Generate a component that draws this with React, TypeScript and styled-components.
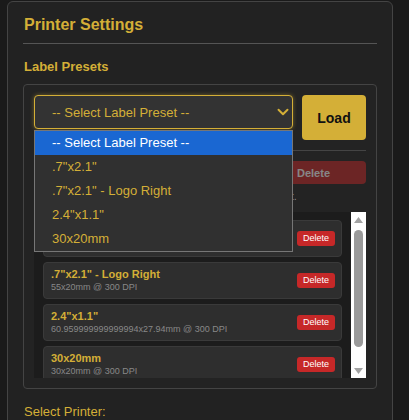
import styled, { createGlobalStyle } from 'styled-components';
import { ChevronDown } from 'lucide-react';

const gold = '#d4af37';

const GlobalStyle = createGlobalStyle`
  body {
    margin: 0;
    background: #1a1a1a;
    font-family: 'Liberation Sans', Arial, sans-serif;
  }
`;

const presets = [
  { name: '.7"x2.1"', meta: '55x20mm @ 300 DPI' },
  { name: '.7"x2.1" - Logo Right', meta: '55x20mm @ 300 DPI' },
  { name: '2.4"x1.1"', meta: '60.959999999999994x27.94mm @ 300 DPI' },
  { name: '30x20mm', meta: '30x20mm @ 300 DPI' },
];

const options = ['-- Select Label Preset --', ...presets.map((p) => p.name)];

// headless has no visible scrollbars, so the list's bar is drawn by hand
const ScrollBar = () => (
  <Track>
    <Arrow>
      <svg width='9' height='6' viewBox='0 0 9 6'>
        <polygon points='0,6 9,6 4.5,0' fill='#a3a3a3' />
      </svg>
    </Arrow>
    <Rail>
      <Thumb />
    </Rail>
    <Arrow>
      <svg width='9' height='6' viewBox='0 0 9 6'>
        <polygon points='0,0 9,0 4.5,6' fill='#a3a3a3' />
      </svg>
    </Arrow>
  </Track>
);

const App = () => {
  return (
    <>
      <GlobalStyle />
      <Page>
        <Panel>
          <Title>Printer Settings</Title>
          <SectionTitle>Label Presets</SectionTitle>
          <PresetBox>
            <LoadRow>
              <SelectWrap>
                <SelectBox>
                  <span>-- Select Label Preset --</span>
                  <ChevronDown size={18} strokeWidth={2.6} />
                </SelectBox>
                <Dropdown>
                  {options.map((o, i) => (
                    <Option key={o} active={i === 0}>
                      {o}
                    </Option>
                  ))}
                </Dropdown>
              </SelectWrap>
              <LoadButton>Load</LoadButton>
            </LoadRow>
            <Divider />
            <ManageRow>
              <NameInput placeholder='Preset name' />
              <DisabledDelete disabled>Delete</DisabledDelete>
            </ManageRow>
            <Hint>Select a saved preset above to load it, or to remove it.</Hint>
            <PresetList>
              <Viewport>
                {presets.map((p) => (
                  <PresetItem key={p.name}>
                    <div>
                      <PresetName>{p.name}</PresetName>
                      <PresetMeta>{p.meta}</PresetMeta>
                    </div>
                    <ItemDelete>Delete</ItemDelete>
                  </PresetItem>
                ))}
              </Viewport>
              <ScrollBar />
            </PresetList>
          </PresetBox>
          <PrinterLabel>Select Printer:</PrinterLabel>
        </Panel>
      </Page>
    </>
  );
};

const Page = styled.div`
  padding: 1px 0 0 7px;
`;

const Panel = styled.div`
  width: 386px;
  box-sizing: border-box;
  background: #222;
  border: 1px solid #444;
  border-radius: 6px;
  padding: 14px 15px 20px;
`;

const Title = styled.h2`
  margin: 0;
  padding: 0 1px 9px;
  font-size: 16px;
  font-weight: bold;
  color: ${gold};
  border-bottom: 1px solid #555;
`;

const SectionTitle = styled.h3`
  margin: 15px 0 10px 1px;
  font-size: 13px;
  font-weight: bold;
  color: ${gold};
`;

const PresetBox = styled.div`
  border: 1px solid #444;
  border-radius: 4px;
  background: #232323;
  padding: 10px;
`;

const LoadRow = styled.div`
  display: flex;
  align-items: flex-start;
  gap: 9px;
`;

const SelectWrap = styled.div`
  position: relative;
  flex: 1;
`;

const SelectBox = styled.div`
  height: 34px;
  box-sizing: border-box;
  display: flex;
  align-items: center;
  justify-content: space-between;
  padding: 0 0 0 17px;
  border: 1px solid ${gold};
  border-radius: 4px;
  background: #333;
  box-shadow: 0 0 4px rgba(212, 175, 55, 0.45);
  color: ${gold};
  font-size: 13px;
`;

const Dropdown = styled.div`
  position: absolute;
  top: calc(100% + 1px);
  left: 0;
  right: 0;
  z-index: 5;
  background: #303030;
  border: 1px solid #767676;
`;

const Option = styled.div<{ active?: boolean }>`
  height: 24px;
  line-height: 24px;
  padding-left: 17px;
  font-size: 13px;
  color: ${(p) => (p.active ? '#fff' : gold)};
  background: ${(p) => (p.active ? '#1a67d2' : 'transparent')};
`;

const LoadButton = styled.button`
  width: 64px;
  height: 45px;
  border: none;
  border-radius: 4px;
  background: ${gold};
  color: #111;
  font-family: inherit;
  font-size: 14px;
  font-weight: bold;
`;

const Divider = styled.div`
  height: 1px;
  background: #444;
  margin: 10px 0;
`;

const ManageRow = styled.div`
  display: flex;
  gap: 9px;
`;

const NameInput = styled.input`
  flex: 1;
  height: 23px;
  box-sizing: border-box;
  background: #333;
  border: 1px solid #555;
  border-radius: 4px;
  color: ${gold};
  font-family: inherit;
`;

const DisabledDelete = styled.button`
  width: 105px;
  height: 23px;
  border: none;
  border-radius: 4px;
  background: #c62828;
  color: #fff;
  opacity: 0.45;
  font-family: inherit;
  font-size: 11px;
  font-weight: bold;
`;

const Hint = styled.div`
  margin: 6px 0 10px;
  font-size: 11px;
  color: #888;
  white-space: nowrap;
`;

const PresetList = styled.div`
  height: 166px;
  display: flex;
  background: #1c1c1c;
`;

const Viewport = styled.div`
  flex: 1;
  overflow: hidden;
  padding: 8px 9px;
  display: flex;
  flex-direction: column;
  gap: 5px;
`;

const Track = styled.div`
  width: 15px;
  background: #fff;
  display: flex;
  flex-direction: column;
`;

const Arrow = styled.div`
  height: 15px;
  display: flex;
  align-items: center;
  justify-content: center;
`;

const Rail = styled.div`
  flex: 1;
  padding: 3px 3px 16px;
`;

const Thumb = styled.div`
  height: 100%;
  background: #9a9a9a;
  border-radius: 5px;
`;

const PresetItem = styled.div`
  flex-shrink: 0;
  display: flex;
  align-items: center;
  justify-content: space-between;
  background: #2e2e2e;
  border: 1px solid #3a3a3a;
  border-radius: 4px;
  padding: 5px 6px 6px 7px;
`;

const PresetName = styled.div`
  font-size: 11px;
  font-weight: bold;
  color: ${gold};
`;

const PresetMeta = styled.div`
  margin-top: 2px;
  font-size: 9px;
  color: #888;
`;

const ItemDelete = styled.button`
  height: 15px;
  padding: 0 6px;
  border: none;
  border-radius: 3px;
  background: #c62828;
  color: #fff;
  font-family: inherit;
  font-size: 9px;
`;

const PrinterLabel = styled.div`
  margin: 15px 0 0 1px;
  font-size: 13px;
  color: ${gold};
`;

export default App;
